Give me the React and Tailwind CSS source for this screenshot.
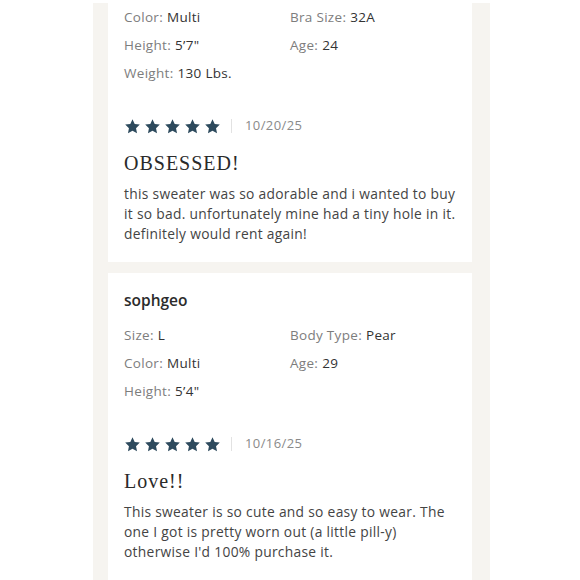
import { Fragment } from 'react';

const sans = { fontFamily: '"Open Sans", "Liberation Sans", Arial, sans-serif' };
const serif = { fontFamily: '"Liberation Serif", "Times New Roman", serif' };

function Stars() {
  return (
    <div className="flex items-center gap-[3px]">
      {[0, 1, 2, 3, 4].map(i => (
        <svg key={i} viewBox="0 0 24 24" className="w-[17px] h-[17px]">
          <path
            d="M12 1.8l3.1 6.6 7.2.9-5.3 5 1.4 7.1L12 17.9l-6.4 3.5 1.4-7.1-5.3-5 7.2-.9z"
            fill="#2d4a5d"
          />
        </svg>
      ))}
    </div>
  );
}

function Details({ items }) {
  return (
    <div className="grid grid-cols-2">
      {items.map(([label, value], i) => (
        <div key={i} className="h-[28px] flex items-center text-[13.5px] tracking-[0.3px]">
          {label && (
            <Fragment>
              <span className="text-[#7d7d7d]">{label}:</span>
              <span className="ml-1 text-[#333]">{value}</span>
            </Fragment>
          )}
        </div>
      ))}
    </div>
  );
}

function Review({ user, details, date, title, body, first }) {
  return (
    <div className={`bg-white px-4 ${first ? 'pt-0 pb-[18px]' : 'pt-4 pb-5'}`} style={sans}>
      {user && (
        <div className="h-[24px] flex items-center text-[15.5px] font-semibold text-[#2b2b2b] mb-2">{user}</div>
      )}
      <Details items={details} />
      <div className="mt-[29px] h-[20px] flex items-center">
        <Stars />
        <div className="ml-[10px] w-px h-[14px] bg-[#e2e2e2]" />
        <span className="ml-[13px] text-[13px] tracking-[0.4px] text-[#8a8a8a]">{date}</span>
      </div>
      <div className="mt-[13px] h-[28px] flex items-center text-[20px] tracking-[1px] text-[#2a2a2a]" style={serif}>
        {title}
      </div>
      <p className="mt-[7px] text-[13.8px] leading-[20px] tracking-[0.3px] text-[#444]">{body}</p>
    </div>
  );
}

export default function App() {
  return (
    <div className="w-[580px] h-[580px] bg-white overflow-hidden">
      <div className="ml-[93px] w-[397px] h-full mt-[3px] bg-[#f6f4f0] pl-[15px] pr-[18px] flex flex-col gap-[11px]">
        <Review
          first
          details={[
            ['Color', 'Multi'],
            ['Bra Size', '32A'],
            ['Height', '5\u20197"'],
            ['Age', '24'],
            ['Weight', '130 Lbs.'],
            [null, null],
          ]}
          date="10/20/25"
          title="OBSESSED!"
          body="this sweater was so adorable and i wanted to buy it so bad. unfortunately mine had a tiny hole in it. definitely would rent again!"
        />
        <Review
          user="sophgeo"
          details={[
            ['Size', 'L'],
            ['Body Type', 'Pear'],
            ['Color', 'Multi'],
            ['Age', '29'],
            ['Height', '5\u20194"'],
            [null, null],
          ]}
          date="10/16/25"
          title="Love!!"
          body="This sweater is so cute and so easy to wear. The one I got is pretty worn out (a little pill-y) otherwise I'd 100% purchase it."
        />
      </div>
    </div>
  );
}
